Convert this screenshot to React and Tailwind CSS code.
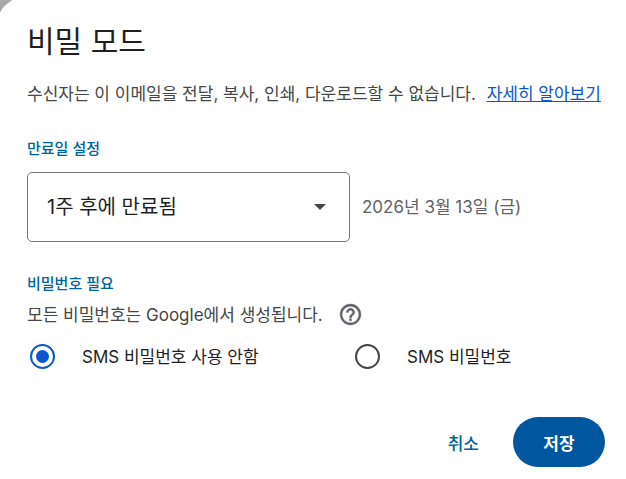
import { useState } from "react";

function Field({ id, value, checked, onSelect, children }) {
  return (
    <div className="flex items-center pl-[3px]">
      <input
        type="radio"
        id={id}
        name="passcode"
        value={value}
        checked={checked}
        onChange={() => onSelect(value)}
        className="size-[25px] shrink-0 appearance-none rounded-full border-2 border-[#444746] p-1 checked:border-[#0b57d0] checked:bg-[#0b57d0] checked:bg-clip-content"
      />
      <label htmlFor={id} className="pl-[27px] text-[17px] leading-6 text-[#1f1f1f]">
        {children}
      </label>
    </div>
  );
}

export default function App() {
  const [expiry, setExpiry] = useState("1w");
  const [passcode, setPasscode] = useState("none");

  return (
    <div className="h-screen overflow-hidden bg-[#a9a9a9] font-['Inter','Noto_Sans_CJK_KR',sans-serif]">
      <main
        role="dialog"
        aria-labelledby="title"
        className="-ml-1 -mt-1 rounded-l-[32px] bg-white pb-7 pl-[31px] pr-[21px] pt-[25px] text-[17px] leading-6 text-[#444746]"
      >
        <h1 id="title" className="text-[30px] leading-10 text-[#1f1f1f]">비밀 모드</h1>
        <p className="mt-[21px] whitespace-nowrap">
          수신자는 이 이메일을 전달, 복사, 인쇄, 다운로드할 수 없습니다.{" "}
          <a href="#learn" className="ml-1.5 text-[#0b57d0] underline">자세히 알아보기</a>
        </p>

        <label htmlFor="expiry" className="mt-[33px] block text-[15px] font-medium leading-5 text-[#00639b]">
          만료일 설정
        </label>
        <div className="mt-[13px] flex items-center gap-3">
          <div className="relative w-[323px]">
            <select
              id="expiry"
              value={expiry}
              onChange={(e) => setExpiry(e.target.value)}
              className="h-[70px] w-full appearance-none rounded-[5px] border border-[#747775] bg-white pl-[19px] pr-12 text-[20px] text-[#1f1f1f]"
            >
              <option value="1d">1일 후에 만료됨</option>
              <option value="1w">1주 후에 만료됨</option>
              <option value="1m">1개월 후에 만료됨</option>
            </select>
            <svg viewBox="0 0 12 6" className="pointer-events-none absolute right-6 top-8 h-[6px] w-3" aria-hidden="true">
              <path d="M0 0h12L6 6z" fill="#444746" />
            </svg>
          </div>
          <span className="text-[#5f6368]">2026년 3월 13일 (금)</span>
        </div>

        <h2 className="mt-8 text-[15px] font-medium leading-5 text-[#00639b]">비밀번호 필요</h2>
        <div className="mt-2 flex items-center gap-[15px]">
          <p>모든 비밀번호는 Google에서 생성됩니다.</p>
          <button type="button" aria-label="도움말">
            <svg viewBox="0 0 24 24" className="size-[25px]" fill="#5f6368" stroke="#5f6368" strokeWidth="0.4" aria-hidden="true">
              <path d="M11 18h2v-2h-2v2zm1-16C6.480 2 2 6.480 2 12s4.480 10 10 10 10-4.480 10-10S17.520 2 12 2zm0 18c-4.410 0-8-3.590-8-8s3.590-8 8-8 8 3.590 8 8-3.590 8-8 8zm0-14c-2.210 0-4 1.790-4 4h2c0-1.100.9-2 2-2s2 .9 2 2c0 2-3 1.750-3 5h2c0-2.250 3-2.500 3-5 0-2.210-1.790-4-4-4z" />
            </svg>
          </button>
        </div>
        <div className="mt-[17px] flex">
          <div className="w-[325px]">
            <Field id="none" value="none" checked={passcode === "none"} onSelect={setPasscode}>
              SMS 비밀번호 사용 안함
            </Field>
          </div>
          <Field id="sms" value="sms" checked={passcode === "sms"} onSelect={setPasscode}>
            SMS 비밀번호
          </Field>
        </div>

        <div className="mt-12 flex justify-end gap-1 font-medium">
          <button type="button" className="h-[50px] rounded-full px-[30px] pt-[3px] text-[#00639b]">취소</button>
          <button type="button" className="h-[50px] w-[92px] rounded-full bg-[#00579f] pt-[3px] font-bold text-white">저장</button>
        </div>
      </main>
    </div>
  );
}
